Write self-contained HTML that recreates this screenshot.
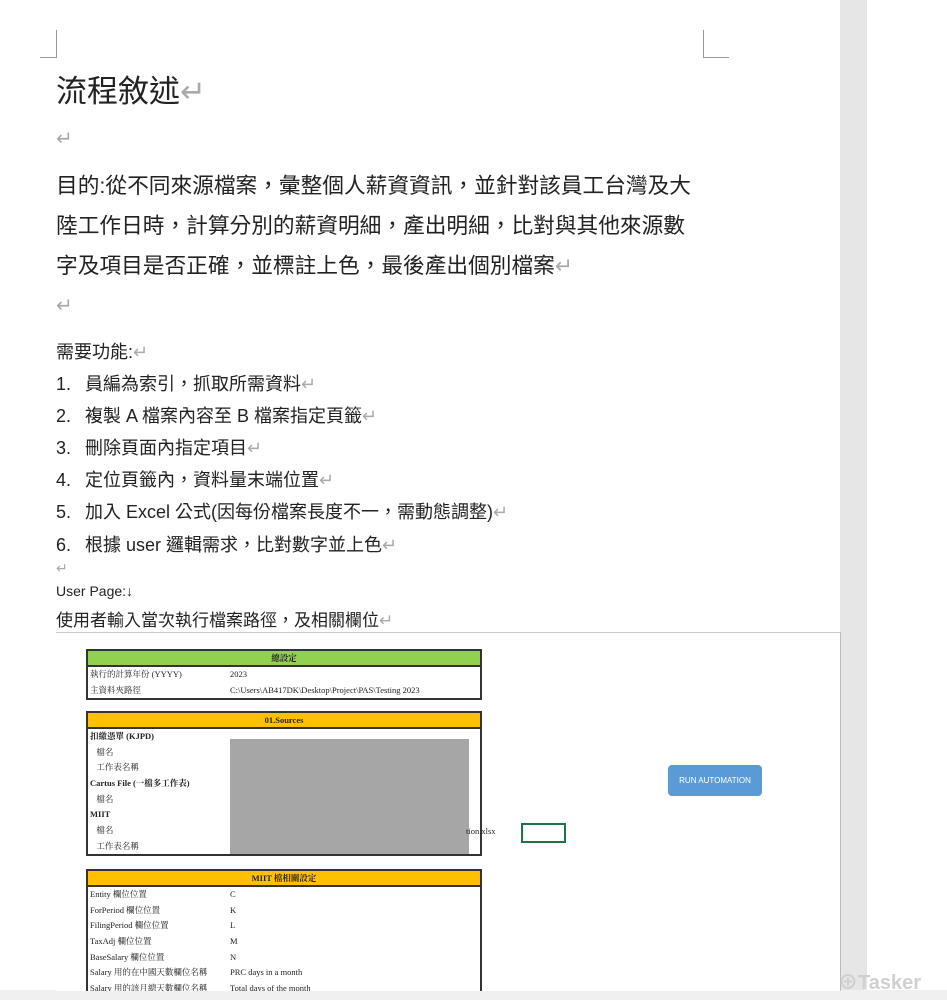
<!DOCTYPE html>
<html><head><meta charset="utf-8"><style>
body{margin:0;width:947px;height:1000px;overflow:hidden;background:#fff;font-family:"Liberation Sans","Noto Sans CJK TC",sans-serif;color:#222;position:relative}
.a{position:absolute;white-space:nowrap}
.r{color:#aaa}
.sh{position:absolute;left:56px;top:632px;width:784px;height:358px;background:#fff;border-top:1px solid #ccc;border-right:1px solid #bbb;overflow:hidden}
.box{position:absolute;left:30px;width:392px;border:2px solid #333;font-family:"Liberation Serif","Noto Serif CJK SC",serif;font-size:8.5px;color:#222}
.hd{height:14px;border-bottom:2px solid #333;text-align:center;font-weight:bold;line-height:14px}
.row{height:15.7px;line-height:15.7px;position:relative;padding-left:2px}
.row span{position:absolute;left:142px}
.li{position:absolute;left:56px;font-size:18px;white-space:nowrap;line-height:26px}
.li b{font-weight:normal;display:inline-block;width:29px}
</style></head><body>
<div class="a" style="left:840px;top:0;width:27px;height:1000px;background:#e6e6e6"></div>
<div class="a" style="left:0;top:990px;width:947px;height:10px;background:#f0f0f0"></div>
<div class="a" style="left:56px;top:30px;width:1px;height:28px;background:#999"></div>
<div class="a" style="left:40px;top:57px;width:16px;height:1px;background:#999"></div>
<div class="a" style="left:703px;top:30px;width:1px;height:28px;background:#999"></div>
<div class="a" style="left:703px;top:57px;width:26px;height:1px;background:#999"></div>
<div class="a" style="left:56px;top:66px;font-size:31px">流程敘述<span class="r">↵</span></div>
<div class="a r" style="left:56px;top:126px;font-size:20px">↵</div>
<div class="a" style="left:56px;top:166px;font-size:21.7px;line-height:40px">目的:從不同來源檔案，彙整個人薪資資訊，並針對該員工台灣及大<br>陸工作日時，計算分別的薪資明細，產出明細，比對與其他來源數<br>字及項目是否正確，並標註上色，最後產出個別檔案<span class="r">↵</span></div>
<div class="a r" style="left:56px;top:293px;font-size:20px">↵</div>
<div class="li" style="top:339px">需要功能:<span class="r">↵</span></div>
<div class="li" style="top:371px"><b>1.</b>員編為索引，抓取所需資料<span class="r">↵</span></div>
<div class="li" style="top:403px"><b>2.</b>複製 A 檔案內容至 B 檔案指定頁籤<span class="r">↵</span></div>
<div class="li" style="top:435px"><b>3.</b>刪除頁面內指定項目<span class="r">↵</span></div>
<div class="li" style="top:467px"><b>4.</b>定位頁籤內，資料量末端位置<span class="r">↵</span></div>
<div class="li" style="top:499px"><b>5.</b>加入 Excel 公式(因每份檔案長度不一，需動態調整)<span class="r">↵</span></div>
<div class="li" style="top:532px"><b>6.</b>根據 user 邏輯需求，比對數字並上色<span class="r">↵</span></div>
<div class="a r" style="left:56px;top:560px;font-size:14px">↵</div>
<div class="a" style="left:56px;top:583px;font-size:14px">User Page:↓</div>
<div class="a" style="left:56px;top:606px;font-size:17px">使用者輸入當次執行檔案路徑，及相關欄位<span class="r">↵</span></div>
<div class="sh">
<div class="box" style="top:16px"><div class="hd" style="background:#92d050">總設定</div>
<div class="row">執行的計算年份 (YYYY)<span>2023</span></div><div class="row">主資料夾路徑<span>C:\Users\AB417DK\Desktop\Project\PAS\Testing 2023</span></div></div>
<div class="box" style="top:78px;height:141px"><div class="hd" style="background:#ffc000">01.Sources</div>
<div class="row"><b>扣繳憑單 (KJPD)</b></div><div class="row">&nbsp;&nbsp;&nbsp;檔名</div><div class="row">&nbsp;&nbsp;&nbsp;工作表名稱</div><div class="row"><b>Cartus File (一檔多工作表)</b></div><div class="row">&nbsp;&nbsp;&nbsp;檔名</div><div class="row"><b>MIIT</b></div><div class="row">&nbsp;&nbsp;&nbsp;檔名</div><div class="row">&nbsp;&nbsp;&nbsp;工作表名稱</div>
<div class="a" style="left:142px;top:26px;width:239px;height:115px;background:#a6a6a6"></div>
<div class="a" style="left:378px;top:113px">tion.xlsx</div></div>
<div class="box" style="top:236px;height:140px"><div class="hd" style="background:#ffc000">MIIT 檔相關設定</div>
<div class="row">Entity 欄位位置<span>C</span></div><div class="row">ForPeriod 欄位位置<span>K</span></div><div class="row">FilingPeriod 欄位位置<span>L</span></div><div class="row">TaxAdj 欄位位置<span>M</span></div><div class="row">BaseSalary 欄位位置<span>N</span></div><div class="row">Salary 用的在中國天數欄位名稱<span>PRC days in a month</span></div><div class="row">Salary 用的該月總天數欄位名稱<span>Total days of the month</span></div></div>
<div class="a" style="left:612px;top:132px;width:94px;height:31px;background:#5b9bd5;border-radius:4px;color:#fff;font-size:8px;text-align:center;line-height:31px">RUN AUTOMATION</div>
<div class="a" style="left:465px;top:190px;width:41px;height:16px;border:2px solid #217346"></div>
</div>
<div class="a" style="left:838px;top:966px;font-size:20px;font-weight:bold;color:#d0d0d0">⊕Tasker</div>
</body></html>
